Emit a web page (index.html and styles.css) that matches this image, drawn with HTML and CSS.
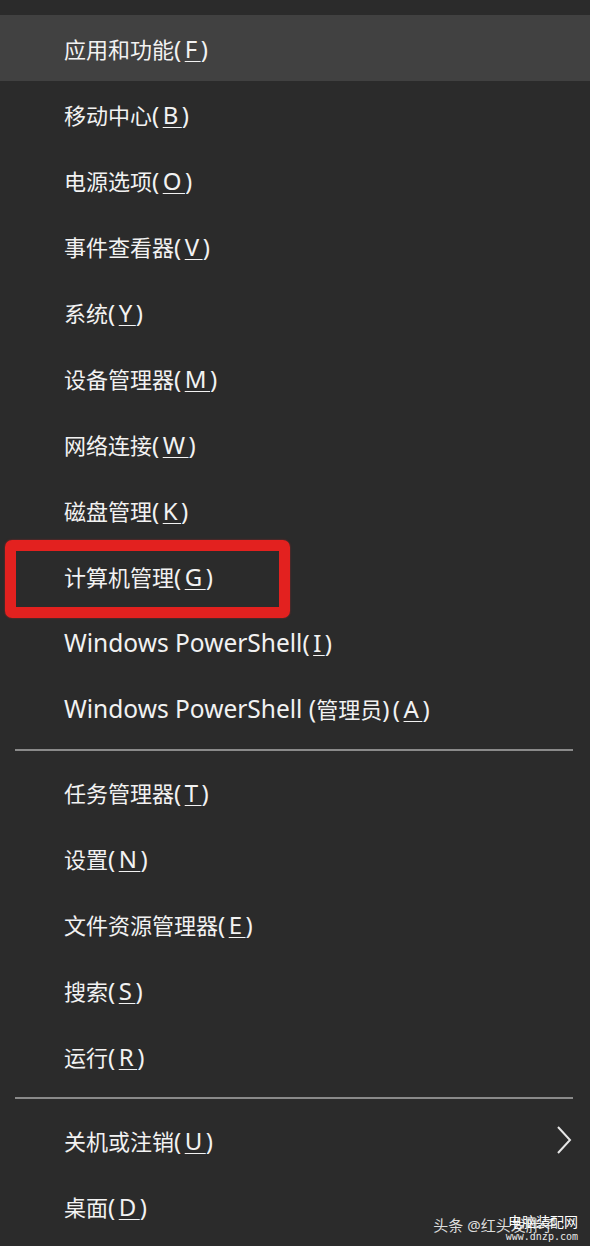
FILE: index.html
```html
<!DOCTYPE html>
<html lang="zh-CN">
<head>
    <meta charset="UTF-8">
    <meta name="viewport" content="width=device-width, initial-scale=1.0">
    <title>Win+X 菜单</title>
    <link rel="stylesheet" href="styles.css">
</head>
<body>
    <div class="menu">
        <ul class="group">
            <li class="item hover"><span>应用和功能<span class="key">(<u>F</u>)</span></span></li>
            <li class="item"><span>移动中心<span class="key">(<u>B</u>)</span></span></li>
            <li class="item"><span>电源选项<span class="key">(<u>O</u>)</span></span></li>
            <li class="item"><span>事件查看器<span class="key">(<u>V</u>)</span></span></li>
            <li class="item"><span>系统<span class="key">(<u>Y</u>)</span></span></li>
            <li class="item"><span>设备管理器<span class="key">(<u>M</u>)</span></span></li>
            <li class="item"><span>网络连接<span class="key">(<u>W</u>)</span></span></li>
            <li class="item"><span>磁盘管理<span class="key">(<u>K</u>)</span></span></li>
            <li class="item marked"><span>计算机管理<span class="key">(<u>G</u>)</span></span></li>
            <li class="item"><span><span class="lat">Windows PowerShell</span><span class="key">(<u>I</u>)</span></span></li>
            <li class="item"><span><span class="lat">Windows PowerShell (</span>管理员<span class="key">)(<u>A</u>)</span></span></li>
        </ul>
        <hr class="sep">
        <ul class="group">
            <li class="item"><span>任务管理器<span class="key">(<u>T</u>)</span></span></li>
            <li class="item"><span>设置<span class="key">(<u>N</u>)</span></span></li>
            <li class="item"><span>文件资源管理器<span class="key">(<u>E</u>)</span></span></li>
            <li class="item"><span>搜索<span class="key">(<u>S</u>)</span></span></li>
            <li class="item"><span>运行<span class="key">(<u>R</u>)</span></span></li>
        </ul>
        <hr class="sep">
        <ul class="group">
            <li class="item">
                <span>关机或注销<span class="key">(<u>U</u>)</span></span>
                <svg class="chevron" width="16" height="28" viewBox="0 0 16 28">
                    <path d="M2 1 L14 14 L2 27" fill="none" stroke="#e6e6e6" stroke-width="2"/>
                </svg>
            </li>
            <li class="item"><span>桌面<span class="key">(<u>D</u>)</span></span></li>
        </ul>
    </div>

    <div class="watermark">
        <span class="wm-main">头条 @红头发胖子</span>
        <span class="wm-site">电脑装配网<small>www.dnzp.com</small></span>
    </div>
</body>
</html>
```

FILE: styles.css
```css
:root {
    --bg: #2b2b2b;
    --hover: #414141;
    --text: #f2f2f2;
    --line: #8a8a8a;
    --mark: #e3211f;
}

body {
    margin: 0;
    width: 590px;
    height: 1246px;
    background: var(--bg);
    color: var(--text);
    font-family: "Noto Sans", "Noto Sans CJK SC", sans-serif;
    position: relative;
    overflow: hidden;
}

.menu {
    padding-top: 15px;
}

.group {
    list-style: none;
    margin: 0;
    padding: 0;
}

.item {
    height: 66px;
    display: flex;
    align-items: center;
    justify-content: space-between;
    padding: 0 18px 0 64px;
    font-size: 22px;
    position: relative;
}

/* the Latin glyphs of the menu font run wider than Noto's */
.lat {
    font-size: 24.5px;
}

.key {
    font-size: 24px;
    letter-spacing: 3.5px;
}

.item u {
    text-decoration-thickness: 1px;
    text-underline-offset: 3px;
}

.hover {
    background: var(--hover);
}

/* red annotation box drawn over the item */
.marked::after {
    content: '';
    position: absolute;
    left: 5px;
    top: -3px;
    width: 285px;
    height: 78px;
    box-sizing: border-box;
    border: 11px solid var(--mark);
    border-radius: 7px;
    box-shadow: 0 0 2px rgba(227, 33, 31, 0.6);
}

.sep {
    margin: 8px 17px 8px 15px;
    border: 0;
    height: 2px;
    background: var(--line);
}

.chevron {
    display: block;
}

.watermark {
    position: absolute;
    right: 12px;
    bottom: 3px;
    display: flex;
    align-items: flex-end;
}

.wm-main {
    font-size: 15px;
    color: #dcdcdc;
    margin-bottom: 8px;
}

.wm-site {
    display: flex;
    flex-direction: column;
    align-items: flex-end;
    margin-left: -50px;
    font-size: 14px;
    line-height: 18px;
    color: #ffffff;
}

.wm-site small {
    font-family: "DejaVu Sans Mono", monospace;
    font-size: 10px;
    line-height: 12px;
    color: #e8e8e8;
}
```
